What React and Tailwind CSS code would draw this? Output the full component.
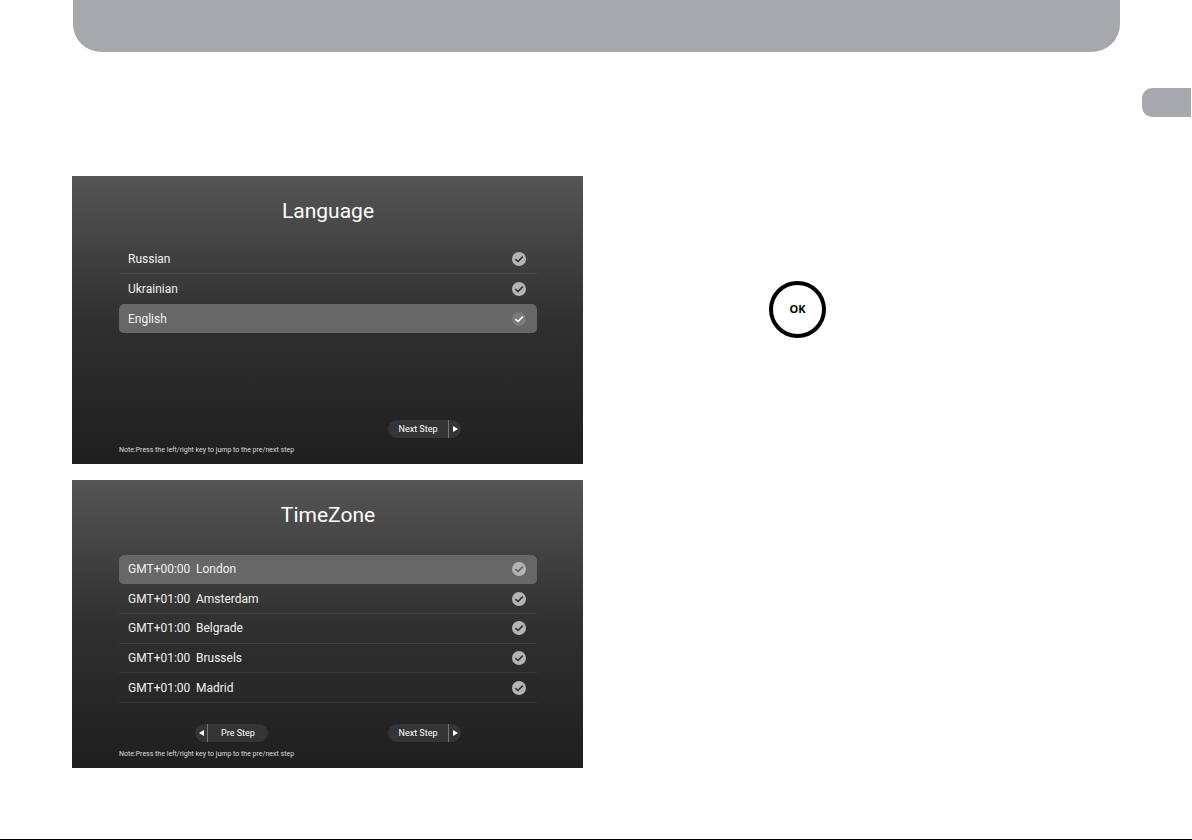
import { useState } from 'react';

const languages = [
  { id: 'ru', label: 'Russian' },
  { id: 'uk', label: 'Ukrainian' },
  { id: 'en', label: 'English' },
];

const timeZones = [
  { id: 'london', offset: 'GMT+00:00', label: 'London' },
  { id: 'amsterdam', offset: 'GMT+01:00', label: 'Amsterdam' },
  { id: 'belgrade', offset: 'GMT+01:00', label: 'Belgrade' },
  { id: 'brussels', offset: 'GMT+01:00', label: 'Brussels' },
  { id: 'madrid', offset: 'GMT+01:00', label: 'Madrid' },
];

function Option({ name, option, active, saved, onSelect }) {
  const highlighted = active
    ? 'rounded-[5px] border-transparent bg-[#676767]'
    : 'border-white/8 has-[+label_:checked]:border-transparent';
  const disc = saved ? 'bg-[#7b7b7b]' : 'bg-[#b4b4b4]';
  const tick = saved ? 'stroke-white' : active ? 'stroke-[#606060]' : 'stroke-[#303030]';

  return (
    <label
      className={`flex flex-1 items-center border-b bg-clip-padding pr-[11px] pl-[9px] text-[12px] leading-4 text-[#f2f2f2] ${highlighted}`}
    >
      {option.offset && <span className="w-[68px]">{option.offset}</span>}
      <span>{option.label}</span>
      <span className="ml-auto grid">
        <input
          type="radio"
          name={name}
          checked={active}
          onChange={() => onSelect(option.id)}
          className={`col-start-1 row-start-1 h-[14px] w-[14px] appearance-none rounded-full ${disc}`}
        />
        <svg
          viewBox="0 0 14 14"
          className={`pointer-events-none col-start-1 row-start-1 h-[14px] w-[14px] fill-none ${tick}`}
          strokeWidth="1.6"
        >
          <path d="M3.4 7.2 L6 9.5 L10.8 4.6" />
        </svg>
      </span>
    </label>
  );
}

function Arrow({ left }) {
  return (
    <svg viewBox="0 0 5 6" className="h-[6px] w-[5px] fill-white">
      <path d={left ? 'M5 0 V6 L0 3 Z' : 'M0 0 V6 L5 3 Z'} />
    </svg>
  );
}

function StepButton({ back, children }) {
  return (
    <button
      type="button"
      className={`flex h-[18px] w-[73px] items-stretch rounded-full bg-[#353535] text-[9px] leading-[18px] ${back ? 'flex-row-reverse' : ''}`}
    >
      <span className="flex-1 text-center">{children}</span>
      <span
        className={`flex w-[13px] items-center justify-center border-[#777777] ${back ? 'border-r' : 'border-l'}`}
      >
        <Arrow left={back} />
      </span>
    </button>
  );
}

function Screen({ title, listClass, footer, children }) {
  return (
    <section className="flex min-h-[288px] flex-col bg-linear-to-b from-[#555555] via-[#303030] to-[#1f1f1f] pt-[21px] pr-[46px] pb-[7px] pl-[47px] text-white">
      <h2 className="text-center text-[21px] leading-7">{title}</h2>
      <div className={`flex flex-col ${listClass}`}>{children}</div>
      <div className="mt-auto">
        <div className="flex px-[76px]">{footer}</div>
        <p className="mt-[5px] text-[7px] leading-[14px] text-[#dddddd]">
          Note:Press the left/right key to jump to the pre/next step
        </p>
      </div>
    </section>
  );
}

export default function App() {
  const [language, setLanguage] = useState('en');
  const [zone, setZone] = useState('london');

  return (
    <div className="flex min-h-screen flex-col border-b border-black bg-white font-[Roboto,sans-serif]">
      <header className="mr-[72px] ml-[73px] h-[52px] rounded-b-[28px] bg-[#a7a8ac]" />
      <div className="mt-9 mr-px h-[29px] w-[49px] self-end rounded-l-[10px] bg-[#a7a8ac]" />

      <main className="mt-[59px] grid grid-cols-2 gap-[26px] px-[72px]">
        <div className="flex flex-col gap-4">
          <Screen
            title="Language"
            listClass="mt-[19px] min-h-[90px]"
            footer={
              <div className="ml-auto">
                <StepButton>Next Step</StepButton>
              </div>
            }
          >
            {languages.map((item) => (
              <Option
                key={item.id}
                name="language"
                option={item}
                active={item.id === language}
                saved={item.id === 'en'}
                onSelect={setLanguage}
              />
            ))}
          </Screen>

          <Screen
            title="TimeZone"
            listClass="mt-[26px] min-h-[148px]"
            footer={
              <div className="flex flex-1 justify-between">
                <StepButton back>Pre Step</StepButton>
                <StepButton>Next Step</StepButton>
              </div>
            }
          >
            {timeZones.map((item) => (
              <Option
                key={item.id}
                name="timezone"
                option={item}
                active={item.id === zone}
                onSelect={setZone}
              />
            ))}
          </Screen>
        </div>

        <div className="pt-[105px] pl-[160px]">
          <button
            type="button"
            className="h-[57px] w-[57px] rounded-full border-4 border-black font-['Open_Sans',sans-serif] text-[11px] font-bold text-black"
          >
            OK
          </button>
        </div>
      </main>
    </div>
  );
}
